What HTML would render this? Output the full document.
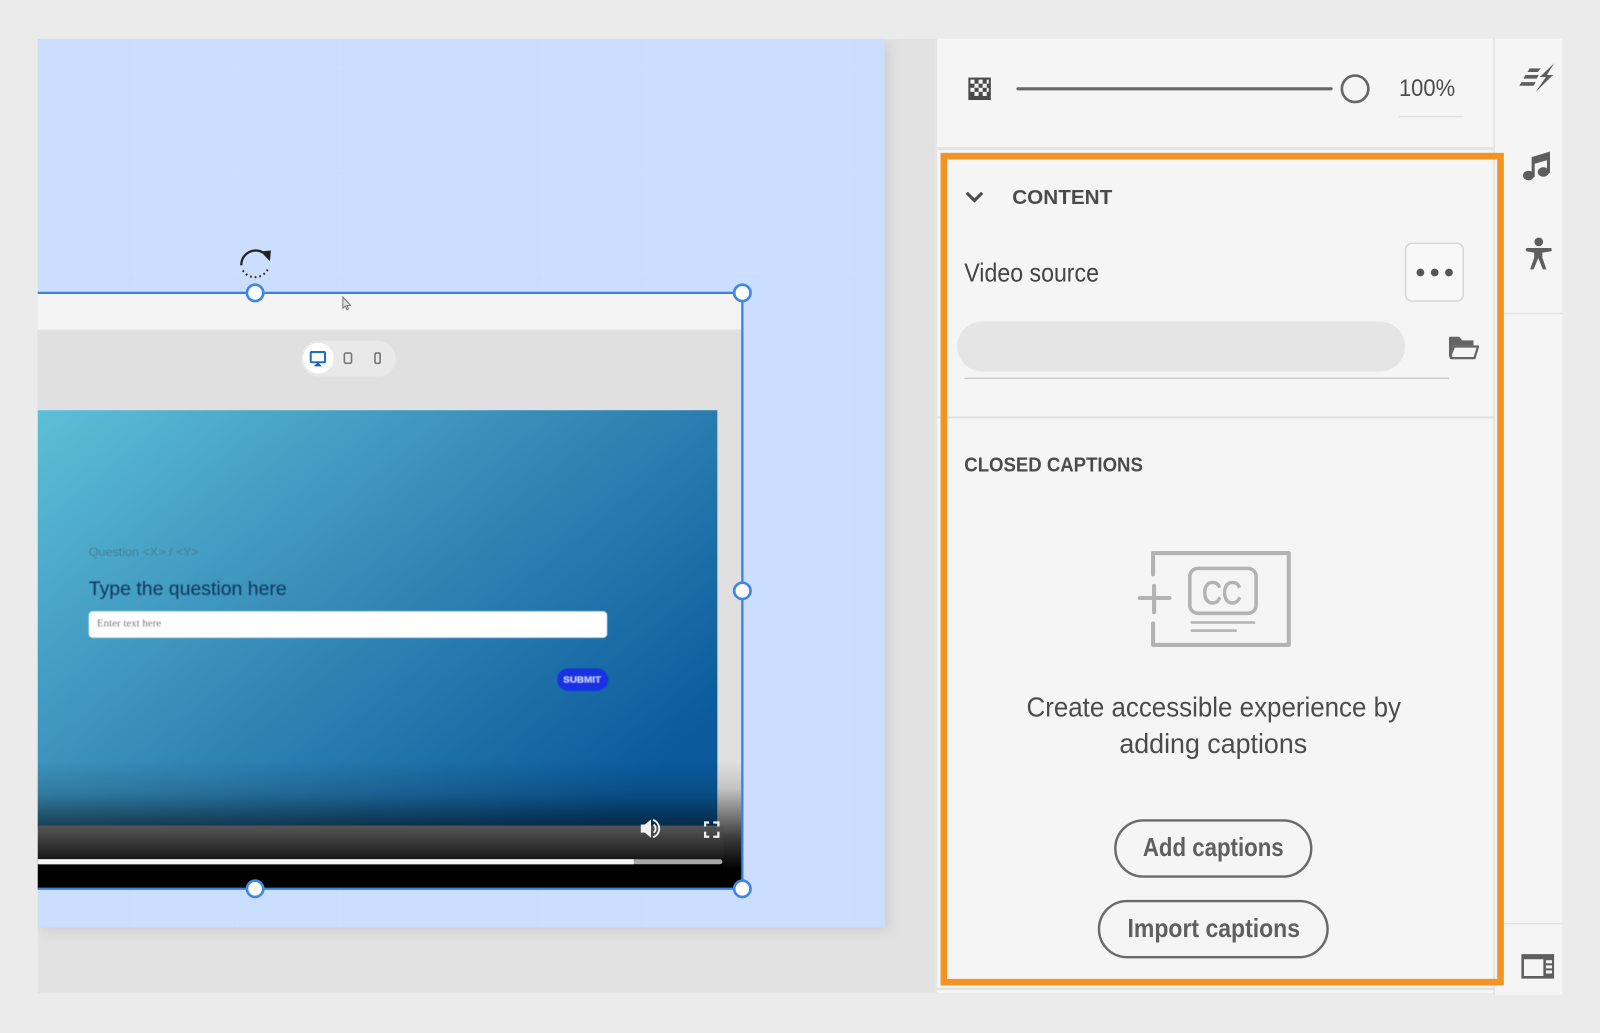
<!DOCTYPE html>
<html><head><meta charset="utf-8"><style>
html,body{margin:0;padding:0;width:1600px;height:1033px;overflow:hidden;background:#ebebeb}
svg{display:block;position:absolute;left:0;top:0}
text{font-family:"Liberation Sans",sans-serif}
</style></head><body>
<svg width="1600" height="1033" viewBox="0 0 1568 1012.3" xmlns="http://www.w3.org/2000/svg">
<defs>
<linearGradient id="vid" x1="0" y1="0" x2="1" y2="0.75"><stop offset="0" stop-color="#5cbfd8"/><stop offset=".45" stop-color="#3a8fba"/><stop offset="1" stop-color="#0a5a9c"/></linearGradient>
<linearGradient id="fade" x1="0" y1="0" x2="0" y2="1"><stop offset="0" stop-color="#000" stop-opacity="0"/><stop offset=".5" stop-color="#000" stop-opacity=".14"/><stop offset="1" stop-color="#000" stop-opacity=".55"/></linearGradient>
<linearGradient id="bar" x1="0" y1="0" x2="0" y2="1"><stop offset="0" stop-color="#565656"/><stop offset=".5" stop-color="#1c1c1c"/><stop offset=".6" stop-color="#000"/><stop offset="1" stop-color="#000"/></linearGradient>
<linearGradient id="side" x1="0" y1="0" x2="0" y2="1"><stop offset="0" stop-color="#e0e0e0"/><stop offset=".22" stop-color="#c4c4c4"/><stop offset=".6" stop-color="#3c3c3c"/><stop offset=".85" stop-color="#000"/><stop offset="1" stop-color="#000"/></linearGradient>
<filter id="sh" x="-5%" y="-5%" width="110%" height="110%"><feGaussianBlur stdDeviation="6"/></filter>
<filter id="soft"><feGaussianBlur stdDeviation=".45"/></filter>
</defs>
<rect width="1568" height="1013" fill="#ebebeb"/>
<rect x="37" y="38" width="880" height="935" fill="#e2e2e2"/>
<rect x="40" y="42" width="832" height="871" fill="#cfcfcf" filter="url(#sh)"/>
<rect x="0" y="0" width="37" height="1013" fill="#ebebeb"/>
<rect x="0" y="0" width="917" height="38" fill="#ebebeb"/>
<rect x="37" y="38" width="830" height="871" fill="#cbdefd"/>
<g stroke="#cee0fd" stroke-width="1"><path d="M133 38V909M233 38V909M333 38V909M433 38V909M533 38V909M633 38V909M733 38V909M833 38V909M37 67H867M37 167H867M37 267H867"/></g>

<!-- frame -->
<rect x="37" y="287" width="690" height="36" fill="#f4f4f4"/>
<rect x="37" y="323" width="690" height="548" fill="#e0e0e0"/>
<rect x="703" y="745" width="24" height="126" fill="url(#side)"/>
<rect x="37" y="402" width="666" height="408" fill="url(#vid)"/>
<rect x="37" y="745" width="666" height="65" fill="url(#fade)"/>
<rect x="37" y="809" width="672" height="62" fill="url(#bar)"/>
<rect x="37" y="842" width="671" height="5" rx="2.5" fill="#a8a8a8"/>
<rect x="37" y="842" width="584" height="5" fill="#f4f4f4"/>

<!-- device pill -->
<rect x="295" y="334" width="93" height="35" rx="17.5" fill="#e9e9e9"/>
<circle cx="312" cy="351" r="15" fill="#fff"/>
<rect x="304.500" y="345" width="14" height="10" rx="1" fill="none" stroke="#1f6fc8" stroke-width="2"/>
<path d="M311.500 355l4 4h-8z" fill="#1f5fb8"/>
<rect x="337.500" y="346" width="7" height="10" rx="1.500" fill="none" stroke="#777" stroke-width="1.600"/>
<rect x="367.500" y="346" width="5" height="10" rx="1.200" fill="none" stroke="#777" stroke-width="1.600"/>

<!-- video text -->
<g filter="url(#soft)">
<text x="87" y="545" font-size="12" fill="#4a7f99" textLength="108" lengthAdjust="spacingAndGlyphs">Question &lt;X&gt; / &lt;Y&gt;</text>
<text x="87" y="583" font-size="19" fill="#0c3558" textLength="194" lengthAdjust="spacingAndGlyphs">Type the question here</text>
<rect x="87" y="599" width="508" height="26" rx="4" fill="#fff"/>
<text x="95" y="614" font-size="10" fill="#555" style="font-family:'Liberation Serif',serif" textLength="63" lengthAdjust="spacingAndGlyphs">Enter text here</text>
<rect x="546" y="655" width="50" height="22" rx="11" fill="#1233e2"/>
<text x="552" y="669" font-size="8.500" font-weight="700" fill="#c9d5ff" textLength="37" lengthAdjust="spacingAndGlyphs">SUBMIT</text>
</g>

<!-- player controls -->
<path d="M628 808h4l6-5v18l-6-5h-4z" fill="#f2f2f2"/>
<path d="M640 803.500a9 9 0 0 1 0 17M640.500 808a5 5 0 0 1 0 8" fill="none" stroke="#f2f2f2" stroke-width="1.800"/>
<path d="M691 810v-4h4M699 806h5v4M704 815v5h-5M695 820h-4v-5" fill="none" stroke="#f2f2f2" stroke-width="2.200"/>

<!-- selection -->
<path d="M37 287H727.500V871H37" fill="none" stroke="#3a80e4" stroke-width="2.200"/>
<g fill="#fff" stroke="#3f86e8" stroke-width="2.600">
<circle cx="250" cy="287" r="8"/><circle cx="727.500" cy="287" r="8"/><circle cx="727.500" cy="579" r="8"/><circle cx="250" cy="871" r="8"/><circle cx="727.500" cy="871" r="8"/>
</g>
<!-- rotate -->
<path d="M236.500 260a14 14 0 0 1 22 -12" fill="none" stroke="#222" stroke-width="2.200"/>
<path d="M255.500 246.500L265.500 245.500L264.500 256z" fill="#222"/>
<path d="M238 265a14 14 0 0 0 25 -2.400" fill="none" stroke="#333" stroke-width="2" stroke-dasharray="1.800 2.800"/>
<!-- cursor -->
<path d="M336 291v11l2.500-2 1.500 3.500 1.500-.7-1.500-3.300 3.500-.3z" fill="#ddd" stroke="#777" stroke-width="1"/>

<!-- panel -->
<rect x="917" y="38" width="547" height="935" fill="#f5f5f5"/>
<rect x="1465" y="38" width="66" height="937" fill="#f5f5f5"/>
<rect x="1463.500" y="38" width="1.500" height="937" fill="#e0e0e0"/>
<rect x="917" y="144" width="547" height="3" fill="#e4e4e4"/>
<rect x="917" y="408" width="547" height="2" fill="#e2e2e2"/>
<rect x="917" y="968" width="547" height="2" fill="#e2e2e2"/>
<rect x="1474" y="306.500" width="57" height="1.500" fill="#e4e4e4"/>
<rect x="1474" y="904.500" width="57" height="1.500" fill="#e2e2e2"/>
<rect x="917" y="38" width="1.500" height="935" fill="#e6e6e6"/>

<!-- checker -->
<rect x="949" y="76" width="22" height="22" fill="#4a4a4a"/>
<g fill="#f5f5f5"><rect x="951" y="78" width="4" height="4"/><rect x="959" y="78" width="4" height="4"/><rect x="967" y="78" width="2" height="4"/><rect x="955" y="82" width="4" height="4"/><rect x="963" y="82" width="4" height="4"/><rect x="951" y="86" width="4" height="4"/><rect x="959" y="86" width="4" height="4"/><rect x="967" y="86" width="2" height="4"/><rect x="955" y="90" width="4" height="4"/><rect x="963" y="90" width="4" height="4"/></g>
<!-- slider -->
<rect x="996" y="85.500" width="310" height="3" rx="1.500" fill="#666"/>
<circle cx="1328" cy="87" r="13" fill="#f5f5f5" stroke="#666" stroke-width="2.600"/>
<text x="1371" y="94" font-size="24" fill="#4b4b4b" textLength="55" lengthAdjust="spacingAndGlyphs">100%</text>
<rect x="1371" y="113.500" width="63" height="1.500" fill="#e0e0e0"/>

<!-- content -->
<path d="M947.500 189l7.500 7.500 7.500-7.500" fill="none" stroke="#4b4b4b" stroke-width="3"/>
<text x="992" y="200" font-size="20" font-weight="700" fill="#4b4b4b" textLength="98" lengthAdjust="spacingAndGlyphs">CONTENT</text>
<text x="945" y="276" font-size="25" fill="#444" textLength="132" lengthAdjust="spacingAndGlyphs">Video source</text>
<rect x="1377.500" y="238.500" width="56.500" height="56.500" rx="6" fill="#f8f8f8" stroke="#d6d6d6" stroke-width="1.500"/>
<circle cx="1392" cy="267" r="3.800" fill="#555"/><circle cx="1406" cy="267" r="3.800" fill="#555"/><circle cx="1420" cy="267" r="3.800" fill="#555"/>
<rect x="938" y="315" width="439" height="49" rx="24.500" fill="#e5e5e5"/>
<rect x="945" y="370" width="475" height="1.500" fill="#c9c9c9"/>
<path d="M1420 351.500V330h10l3 3.500h11v5h-20z" fill="#646464"/>
<path d="M1422 351v-4l3-7.500h23.500l-3.500 11.500z" fill="#f5f5f5" stroke="#646464" stroke-width="2.200" stroke-linejoin="round"/>

<text x="945" y="462" font-size="20" font-weight="700" fill="#4b4b4b" textLength="175" lengthAdjust="spacingAndGlyphs">CLOSED CAPTIONS</text>

<!-- cc icon -->
<g fill="none" stroke="#b3b3b3" stroke-linecap="round" stroke-linejoin="round">
<path d="M1130 563V542H1263V632H1130V611" stroke-width="4"/>
<path d="M1117 586H1146M1131 574V600" stroke-width="4"/>
<rect x="1166" y="557" width="65" height="44" rx="8" stroke-width="3.500"/>
<path d="M1168 610H1229" stroke-width="2.500"/><path d="M1168 618H1211" stroke-width="2.500"/>
</g>
<text x="1178" y="592" font-size="32" fill="#b3b3b3" stroke="#b3b3b3" stroke-width=".9" textLength="39" lengthAdjust="spacingAndGlyphs">CC</text>

<text x="1006" y="702" font-size="27" fill="#4b4b4b" textLength="367" lengthAdjust="spacingAndGlyphs">Create accessible experience by</text>
<text x="1097" y="738" font-size="27" fill="#4b4b4b" textLength="184" lengthAdjust="spacingAndGlyphs">adding captions</text>

<rect x="1093" y="804" width="192" height="55" rx="27.500" fill="none" stroke="#6a6a6a" stroke-width="2.400"/>
<text x="1120" y="839" font-size="25" font-weight="700" fill="#5f5f5f" textLength="138" lengthAdjust="spacingAndGlyphs">Add captions</text>
<rect x="1077" y="883" width="224" height="55" rx="27.500" fill="none" stroke="#6a6a6a" stroke-width="2.400"/>
<text x="1105" y="918" font-size="25" font-weight="700" fill="#5f5f5f" textLength="169" lengthAdjust="spacingAndGlyphs">Import captions</text>

<!-- rail icons -->
<g fill="#5e5e5e">
<path d="M1499 67h11l-3 3.500h-10zM1495 73.500h13l-2 3.500h-13zM1491 80.500h14l-2 3.500h-14z"/>
<path d="M1523 62L1509 75.500H1515L1505 90L1522 73.500H1516z"/>
<path d="M1501 154l18-5.500v21h-3v-12.500l-12 3.500v13h-3z"/>
<ellipse cx="1498" cy="172" rx="5.500" ry="4.700"/><ellipse cx="1512.500" cy="168.500" rx="5.500" ry="4.700"/>
<circle cx="1508" cy="237" r="4.300"/>
<path d="M1497 243h22a1.600 1.600 0 0 1 0 3.400l-7.500 1.100v5l4 11.500h-3.500l-4.500-11-4.500 11h-3.500l4-11.500v-5l-6.500-1.100a1.600 1.600 0 0 1 0-3.400z"/>
<path fill-rule="evenodd" d="M1491 935h32v24h-32zM1493.500 940v16.500h19v-16.500zM1515 941v3h6v-3zM1515 946v3h6v-3zM1515 951v3h6v-3z"/>
</g>

<!-- orange highlight -->
<rect x="925" y="153" width="545.500" height="809.500" fill="none" stroke="#f29424" stroke-width="6.500"/>
</svg>
</body></html>
